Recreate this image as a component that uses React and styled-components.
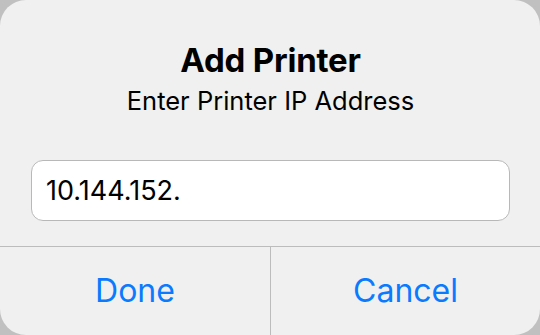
import React, { useState } from "react";
import styled, { createGlobalStyle } from "styled-components";

const GlobalStyle = createGlobalStyle`
  html, body {
    margin: 0;
    padding: 0;
    background: #c0c0c0;
  }
  * {
    box-sizing: border-box;
  }
`;

const Alert = styled.div`
  width: 540px;
  height: 335px;
  display: flex;
  flex-direction: column;
  background: #f0f0f0;
  border-radius: 26px;
  overflow: hidden;
  font-family: Inter, "Noto Sans", sans-serif;
  color: #000;
`;

const Body = styled.div`
  height: 247px;
  display: flex;
  flex-direction: column;
  align-items: center;
  padding: 40px 30px 0 31px;
  border-bottom: 1px solid #bcbcbc;
`;

const Title = styled.h1`
  margin: 0;
  font-size: 33px;
  line-height: 40px;
  font-weight: 700;
  letter-spacing: -0.2px;
`;

const Message = styled.p`
  margin: 6px 0 0;
  font-size: 25.5px;
  line-height: 30px;
  font-weight: 400;
`;

const Field = styled.input`
  margin-top: 44px;
  width: 100%;
  height: 61px;
  padding: 0 14px;
  border: 1px solid #b8b8b8;
  border-radius: 12px;
  background: #fff;
  font-family: inherit;
  font-size: 27px;
  color: #000;
  outline: none;
`;

const Actions = styled.div`
  flex: 1;
  display: grid;
  grid-template-columns: 1fr 1fr;
`;

const ActionButton = styled.button`
  border: none;
  background: transparent;
  font-family: inherit;
  font-size: 32px;
  color: #0a7aff;
  padding: 0 0 2px;
  cursor: pointer;
  border-left: ${(p) => (p.$divider ? "1px solid #bcbcbc" : "none")};
`;

export default function App() {
  const [ip, setIp] = useState("10.144.152.");

  return (
    <>
      <GlobalStyle />
      <Alert>
        <Body>
          <Title>Add Printer</Title>
          <Message>Enter Printer IP Address</Message>
          <Field value={ip} onChange={(e) => setIp(e.target.value)} />
        </Body>
        <Actions>
          <ActionButton>Done</ActionButton>
          <ActionButton $divider>Cancel</ActionButton>
        </Actions>
      </Alert>
    </>
  );
}
